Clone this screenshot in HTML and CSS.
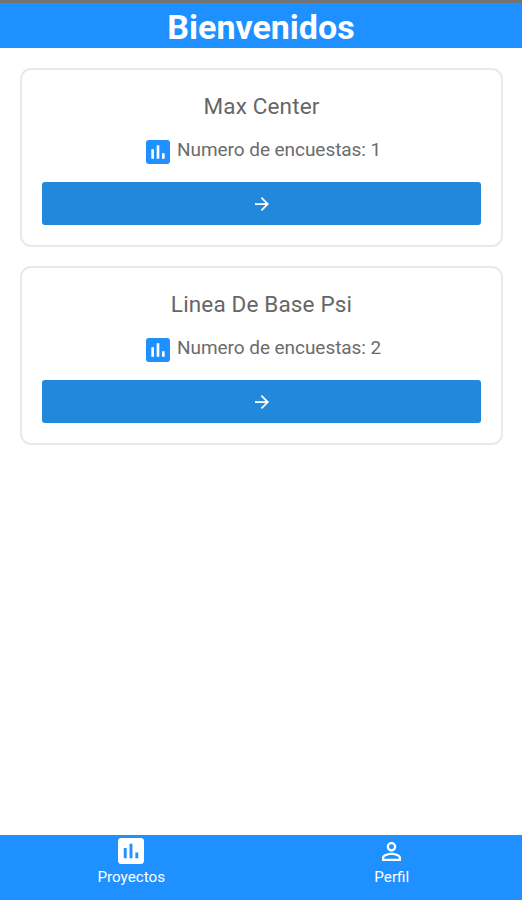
FILE: index.html
```
<!DOCTYPE html>
<html lang="es">
<head>
    <meta charset="UTF-8">
    <title>Bienvenidos</title>
    <link rel="stylesheet" href="styles.css">
</head>
<body>
    <header class="header">
        <h1>Bienvenidos</h1>
    </header>

    <main class="content">
        <div class="card">
            <h2>Max Center</h2>
            <div class="info">
                <svg class="poll" viewBox="3 3 18 18"><path d="M19 3H5C3.9 3 3 3.9 3 5v14c0 1.1.9 2 2 2h14c1.1 0 2-.9 2-2V5c0-1.1-.9-2-2-2zM9 17H7v-7h2v7zm4 0h-2V7h2v10zm4 0h-2v-4h2v4z"/></svg>
                <span>Numero de encuestas: 1</span>
            </div>
            <button class="btn">
                <svg class="arrow" viewBox="4 4 16 16"><path d="M12 4l-1.41 1.41L16.17 11H4v2h12.17l-5.58 5.59L12 20l8-8z"/></svg>
            </button>
        </div>

        <div class="card">
            <h2>Linea De Base Psi</h2>
            <div class="info">
                <svg class="poll" viewBox="3 3 18 18"><path d="M19 3H5C3.9 3 3 3.9 3 5v14c0 1.1.9 2 2 2h14c1.1 0 2-.9 2-2V5c0-1.1-.9-2-2-2zM9 17H7v-7h2v7zm4 0h-2V7h2v10zm4 0h-2v-4h2v4z"/></svg>
                <span>Numero de encuestas: 2</span>
            </div>
            <button class="btn">
                <svg class="arrow" viewBox="4 4 16 16"><path d="M12 4l-1.41 1.41L16.17 11H4v2h12.17l-5.58 5.59L12 20l8-8z"/></svg>
            </button>
        </div>
    </main>

    <nav class="tabs">
        <div class="tab">
            <div class="tab-icon">
                <svg class="poll-tab" viewBox="3 3 18 18"><path d="M19 3H5C3.9 3 3 3.9 3 5v14c0 1.1.9 2 2 2h14c1.1 0 2-.9 2-2V5c0-1.1-.9-2-2-2zM9 17H7v-7h2v7zm4 0h-2V7h2v10zm4 0h-2v-4h2v4z"/></svg>
            </div>
            <span>Proyectos</span>
        </div>
        <div class="tab">
            <div class="tab-icon">
                <svg class="person" viewBox="4 4 16 16"><path d="M12 5.9a2.1 2.1 0 1 1 0 4.2 2.1 2.1 0 0 1 0-4.2m0 9c2.97 0 6.1 1.46 6.1 2.1v1.1H5.9V17c0-.64 3.13-2.1 6.1-2.1M12 4C9.79 4 8 5.79 8 8s1.79 4 4 4 4-1.79 4-4-1.79-4-4-4zm0 9c-2.67 0-8 1.34-8 4v3h16v-3c0-2.66-5.33-4-8-4z"/></svg>
            </div>
            <span>Perfil</span>
        </div>
    </nav>
</body>
</html>
```

FILE: styles.css
```
* {
    box-sizing: border-box;
}
body {
    margin: 0;
    height: 900px;
    display: flex;
    flex-direction: column;
    background: #fff;
    font-family: Roboto, "Liberation Sans", sans-serif;
    overflow: hidden;
}
svg {
    display: block;
    flex-shrink: 0;
}
.header {
    height: 48px;
    border-top: 3px solid #727476;
    background: #1e90ff;
    text-align: center;
}
.header h1 {
    margin: 0;
    font-size: 34px;
    line-height: 48px;
    font-weight: 700;
    color: #fff;
}
.content {
    flex: 1;
    padding: 20px 19px 0 20px;
}
.card {
    height: 179px;
    margin-bottom: 19px;
    padding: 20px 20px 0;
    border: 2px solid #e8e9eb;
    border-radius: 11px;
}
.card h2 {
    margin: 0;
    font-size: 22.5px;
    line-height: 32px;
    font-weight: 400;
    letter-spacing: .15px;
    text-align: center;
    color: #666;
}
.info {
    display: flex;
    margin: 18px 0 18px 104px;
    gap: 7px;
    font-size: 19px;
    line-height: 20px;
    letter-spacing: -.05px;
    color: #6c6c6c;
}
.poll {
    width: 24px;
    height: 24px;
    fill: #1e90ff;
}
.btn {
    display: flex;
    align-items: center;
    justify-content: center;
    width: 100%;
    height: 43px;
    padding: 0;
    border: none;
    border-radius: 3px;
    background: #2288dc;
}
.arrow {
    width: 14px;
    height: 14px;
    fill: #fff;
}
.tabs {
    display: flex;
    height: 65px;
    padding-left: 1px;
    background: #1e90ff;
    color: #fff;
}
.tab {
    flex: 1;
    display: flex;
    flex-direction: column;
    align-items: center;
    padding-top: 3px;
    font-size: 15.2px;
    line-height: 20px;
}
.tab-icon {
    display: flex;
    align-items: center;
    height: 26px;
    margin-bottom: 3px;
}
.tab-icon svg {
    fill: #fff;
}
.poll-tab {
    width: 26px;
    height: 26px;
}
.person {
    width: 19px;
    height: 19px;
}
```
